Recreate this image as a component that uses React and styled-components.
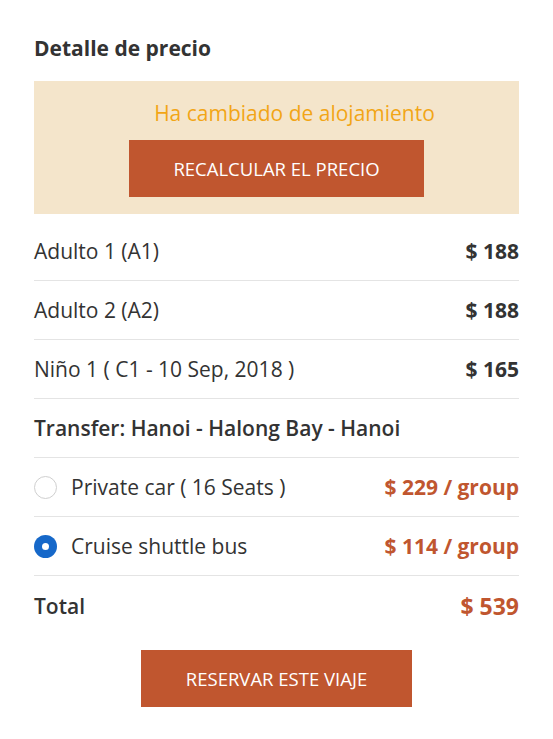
import React, { useState } from "react";
import styled, { createGlobalStyle } from "styled-components";

const GlobalStyle = createGlobalStyle`
  * { box-sizing: border-box; }
  body {
    margin: 0;
    background: #ffffff;
    font-family: "Open Sans", "Noto Sans", sans-serif;
    color: #333333;
  }
`;

const Panel = styled.section`
  width: 553px;
  padding: 34px 34px 32px 34px;
`;

const Heading = styled.h3`
  margin: 0 0 19px 0;
  font-size: 21px;
  font-weight: 700;
  line-height: 28px;
  color: #333333;
`;

const Notice = styled.div`
  background: #f4e5cb;
  padding: 17px 0 17px 0;
  display: flex;
  flex-direction: column;
  align-items: center;
  gap: 12px;
  margin-bottom: 8px;
`;

const NoticeText = styled.p`
  margin: 0;
  padding-left: 36px;
  font-size: 21px;
  line-height: 30px;
  color: #f2a516;
`;

const ActionButton = styled.button`
  width: ${(p) => p.$w}px;
  height: 57px;
  border: none;
  background: #c0562f;
  color: #ffffff;
  font-family: inherit;
  font-size: 18.5px;
  text-transform: uppercase;
  cursor: pointer;
`;

const Row = styled.div`
  display: flex;
  align-items: center;
  justify-content: space-between;
  height: 59px;
  border-bottom: ${(p) => (p.$last ? "none" : "1px solid #e4e4e4")};
  font-size: 21px;
`;

const Label = styled.span`
  display: flex;
  align-items: center;
  gap: 14px;
  font-weight: ${(p) => (p.$bold ? 600 : 400)};
  color: #333333;
`;

const Amount = styled.span`
  font-weight: 700;
  font-size: ${(p) => (p.$large ? 23 : 21)}px;
  color: ${(p) => (p.$accent ? "#c0562f" : "#333333")};
`;

const Radio = styled.span`
  width: 23px;
  height: 23px;
  border-radius: 50%;
  flex-shrink: 0;
  display: inline-flex;
  align-items: center;
  justify-content: center;
  border: ${(p) => (p.$on ? "none" : "1px solid #cfcfcf")};
  background: ${(p) => (p.$on ? "#1668c9" : "#ffffff")};
  cursor: pointer;

  &::after {
    content: "";
    width: 7px;
    height: 7px;
    border-radius: 50%;
    background: #ffffff;
    display: ${(p) => (p.$on ? "block" : "none")};
  }
`;

const Footer = styled.div`
  display: flex;
  justify-content: center;
  padding-top: 15px;
`;

const travellers = [
  { name: "Adulto 1 (A1)", price: "$ 188" },
  { name: "Adulto 2 (A2)", price: "$ 188" },
  { name: "Niño 1 ( C1 - 10 Sep, 2018 )", price: "$ 165" },
];

const transfers = [
  { id: "car", name: "Private car ( 16 Seats )", price: "$ 229 / group" },
  { id: "bus", name: "Cruise shuttle bus", price: "$ 114 / group" },
];

export default function App() {
  const [choice, setChoice] = useState("bus");
  return (
    <>
      <GlobalStyle />
      <Panel>
        <Heading>Detalle de precio</Heading>
        <Notice>
          <NoticeText>Ha cambiado de alojamiento</NoticeText>
          <ActionButton $w={295}>Recalcular el precio</ActionButton>
        </Notice>
        {travellers.map((t) => (
          <Row key={t.name}>
            <Label>{t.name}</Label>
            <Amount>{t.price}</Amount>
          </Row>
        ))}
        <Row>
          <Label $bold>Transfer: Hanoi - Halong Bay - Hanoi</Label>
        </Row>
        {transfers.map((t) => (
          <Row key={t.id} onClick={() => setChoice(t.id)}>
            <Label>
              <Radio $on={choice === t.id} />
              {t.name}
            </Label>
            <Amount $accent>{t.price}</Amount>
          </Row>
        ))}
        <Row $last>
          <Label $bold>Total</Label>
          <Amount $accent $large>$ 539</Amount>
        </Row>
        <Footer>
          <ActionButton $w={271}>Reservar este viaje</ActionButton>
        </Footer>
      </Panel>
    </>
  );
}
